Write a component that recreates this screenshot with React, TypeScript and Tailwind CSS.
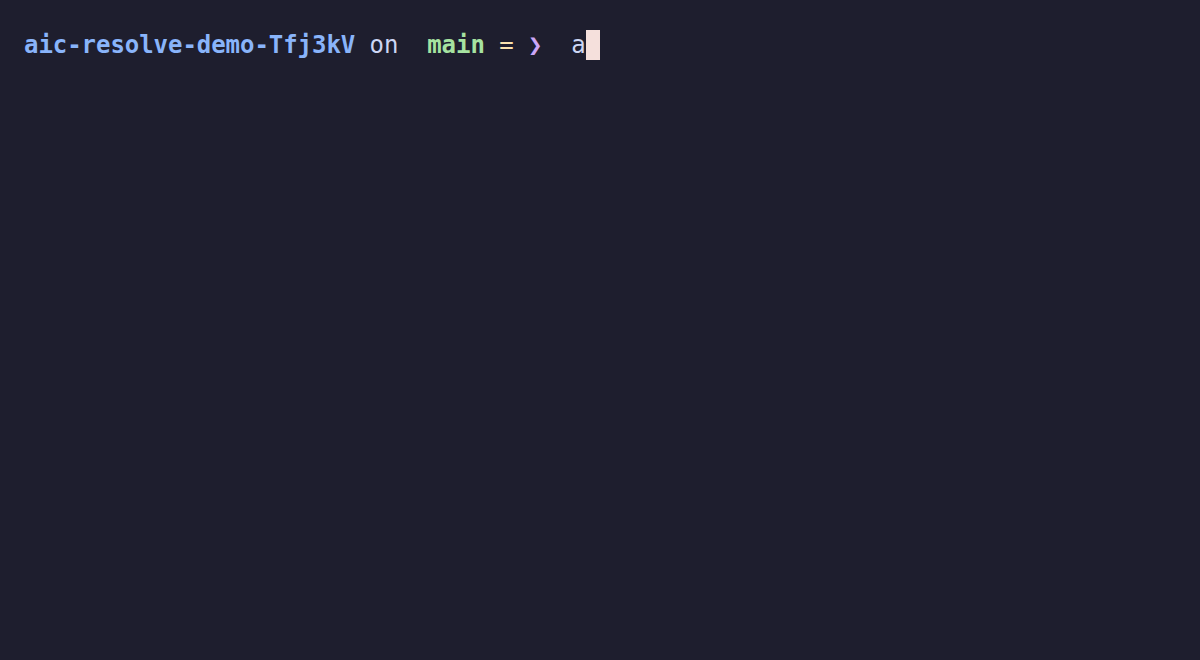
import React from "react";

const mono = { fontFamily: '"DejaVu Sans Mono", "Liberation Mono", monospace' };

const App: React.FC = () => {
    return (
        <div className="w-[1200px] h-[660px] bg-[#1e1e2e] overflow-hidden">
            <div
                className="pl-[24px] pt-[30px] flex items-center h-[60px] text-[24px] leading-[30px] whitespace-pre text-[#cdd6f4] tracking-[-0.05px]"
                style={mono}
            >
                <span className="font-bold text-[#89b4fa]">aic-resolve-demo-Tfj3kV</span>
                <span> on  </span>
                <span className="font-bold text-[#a6e3a1]">main</span>
                <span> </span>
                <span className="text-[#f9e2af]">=</span>
                <span> </span>
                <span className="font-bold text-[#cba6f7]">❯</span>
                <span>  a</span>
                <span className="inline-block w-[14px] h-[30px] bg-[#f5e0dc]" />
            </div>
        </div>
    );
};

export default App;
